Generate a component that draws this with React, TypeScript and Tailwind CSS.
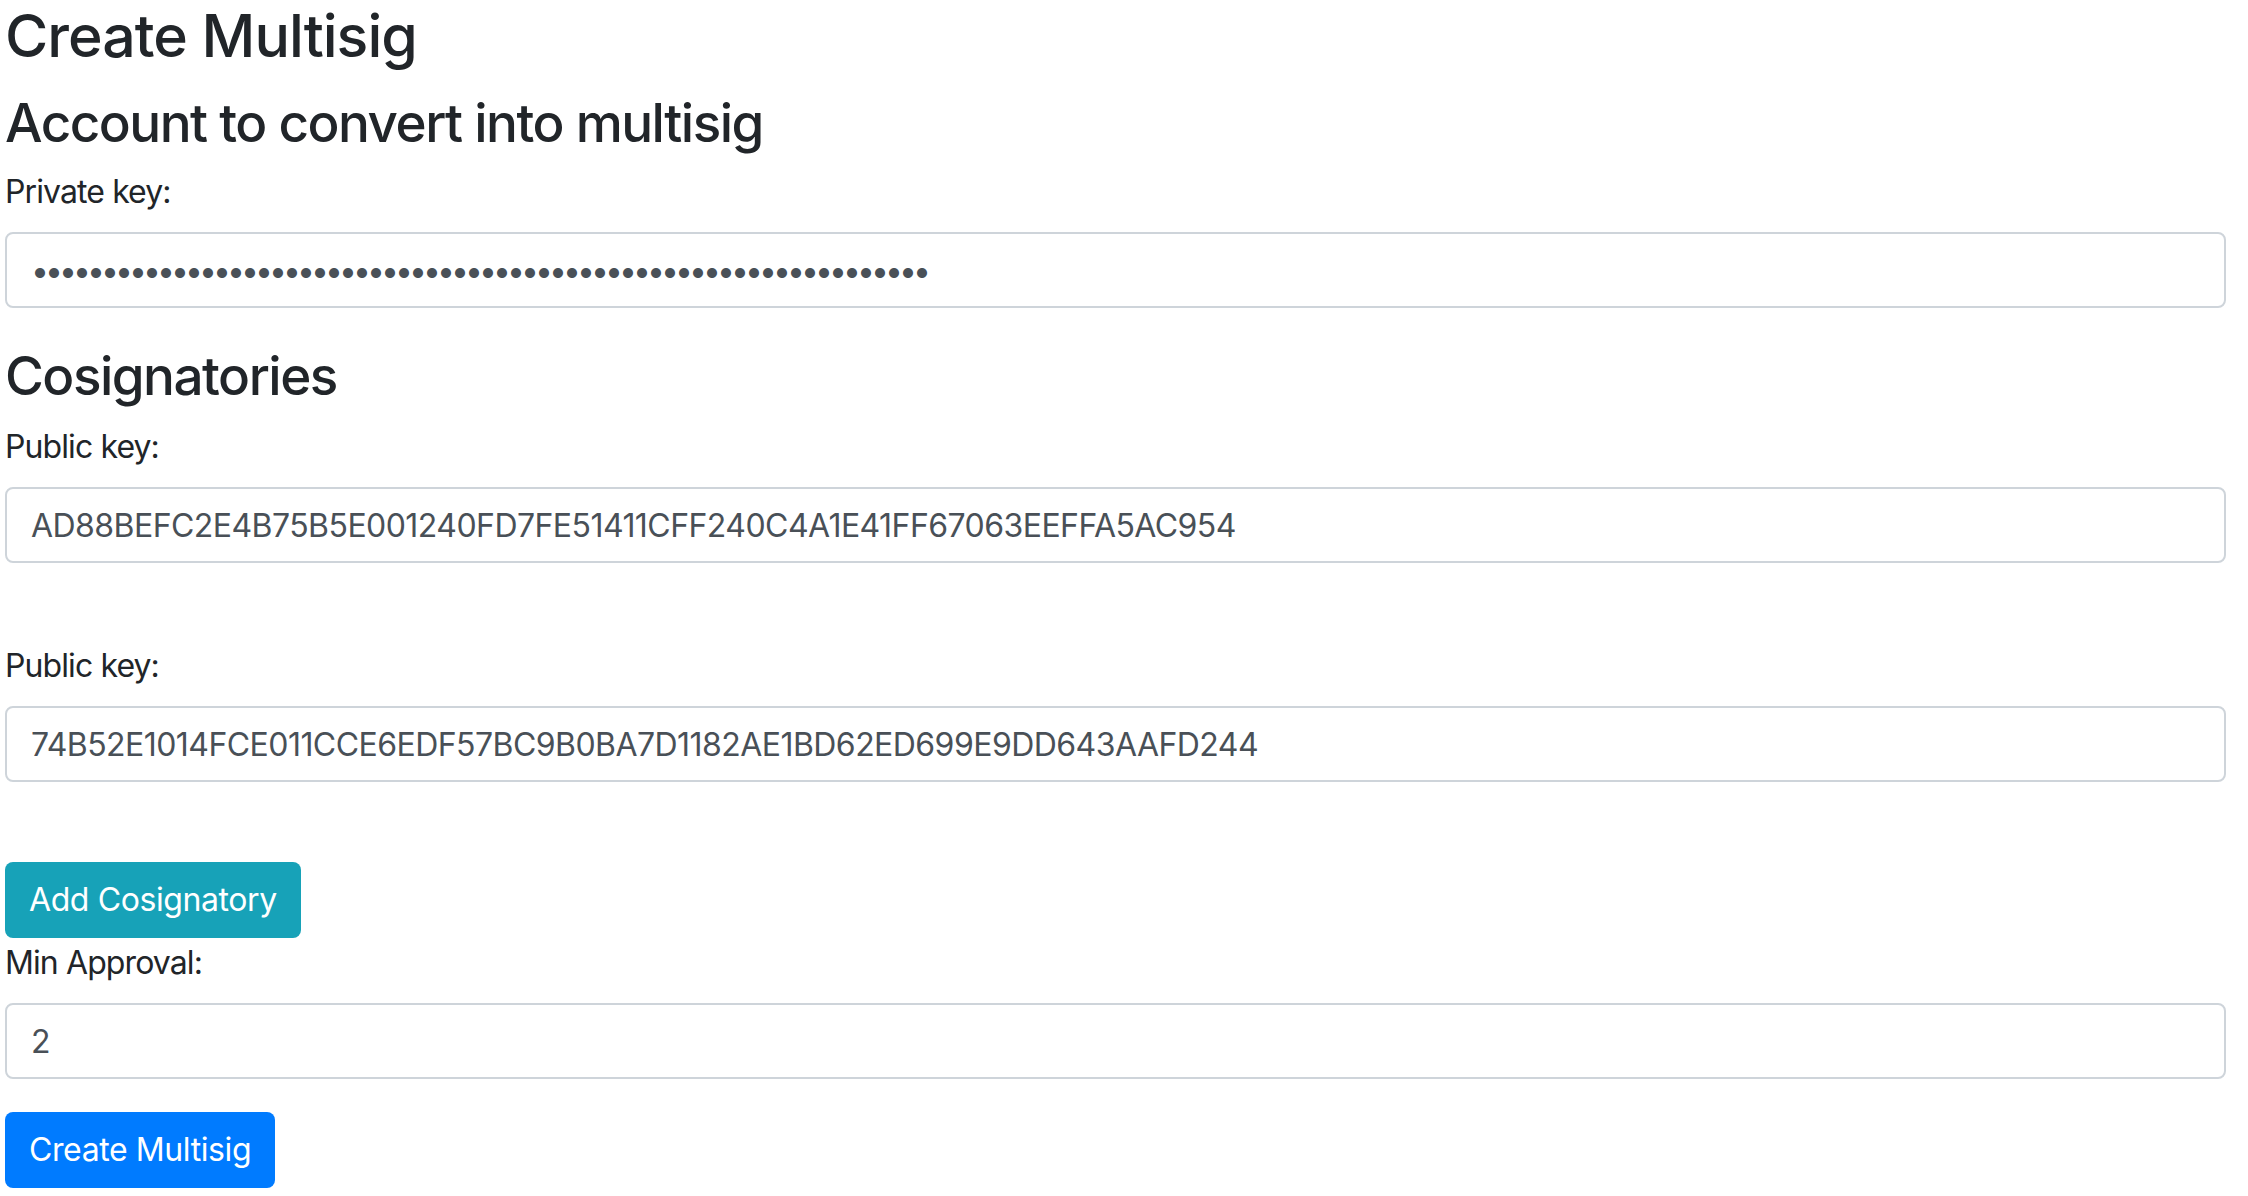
import React from "react";

const font = { fontFamily: "Inter, 'Noto Sans', sans-serif" };

function Field({ label, value, password, labelTop }: { label: string; value: string; password?: boolean; labelTop: string }) {
  return (
    <div className={labelTop}>
      <label className="block text-[32px] leading-[48px] text-[#212529] tracking-[-0.9px]">{label}</label>
      <input
        readOnly
        type={password ? "password" : "text"}
        value={value}
        className={
          "mt-[16px] block w-full h-[76px] px-[24px] border-2 border-[#ced4da] rounded-[8px] bg-white text-[32px] text-[#495057] outline-none " +
          (password ? "tracking-[-4px]" : "tracking-[-0.55px]")
        }
      />
    </div>
  );
}

export default function App() {
  return (
    <div className="min-h-screen bg-white pl-[5px] pr-[22px] text-[#212529]" style={font}>
      <h1 className="text-[59px] leading-[72px] font-medium tracking-[-1px]">Create Multisig</h1>
      <h3 className="mt-[19px] text-[53px] leading-[65px] font-medium tracking-[-1.5px]">Account to convert into multisig</h3>
      <Field labelTop="mt-[12px]" label="Private key:" value={"a".repeat(64)} password />
      <h3 className="mt-[36px] text-[53px] leading-[65px] font-medium tracking-[-1.5px]">Cosignatories</h3>
      <Field labelTop="mt-[14px]" label="Public key:" value="AD88BEFC2E4B75B5E001240FD7FE51411CFF240C4A1E41FF67063EEFFA5AC954" />
      <Field labelTop="mt-[79px]" label="Public key:" value="74B52E1014FCE011CCE6EDF57BC9B0BA7D1182AE1BD62ED699E9DD643AAFD244" />
      <button className="mt-[80px] block h-[76px] px-[24px] rounded-[8px] bg-[#17a2b8] text-white text-[32px] tracking-[-0.4px]">Add Cosignatory</button>
      <Field labelTop="mt-[1px]" label="Min Approval:" value="2" />
      <button className="mt-[33px] block h-[76px] px-[24px] rounded-[8px] bg-[#007bff] text-white text-[32px] tracking-[-0.4px]">Create Multisig</button>
    </div>
  );
}
